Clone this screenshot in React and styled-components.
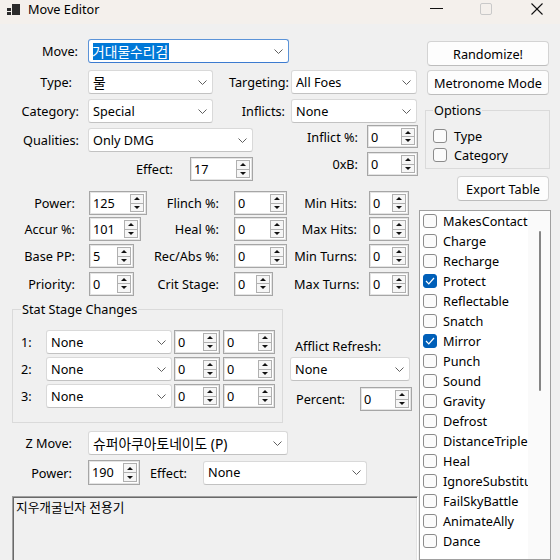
import React from "react";
import styled, { createGlobalStyle } from "styled-components";

const GlobalStyle = createGlobalStyle`
  * { box-sizing: border-box; }
  html, body {
    margin: 0;
    padding: 0;
    background: #f0f0f0;
  }
  body {
    font-family: "Noto Sans", "Noto Sans CJK KR", sans-serif;
    font-size: 12.7px;
    color: #000;
    overflow: hidden;
  }
`;

const Window = styled.div`
  width: 560px;
  height: 560px;
  overflow: hidden;
  background: #f0f0f0;
  display: flex;
  flex-direction: column;
`;

const TitleBar = styled.div`
  height: 24px;
  flex: none;
  background: #f4f0ec;
  display: flex;
  align-items: flex-start;
  padding: 1px 17px 0 7px;
`;

const TitleText = styled.span`
  margin-left: 7px;
  line-height: 16px;
  font-size: 12.7px;
`;

const Controls = styled.div`
  margin-left: auto;
  margin-top: 2px;
  display: flex;
  align-items: flex-start;
  gap: 37px;
  & > svg:last-child {
    margin-left: 2px;
  }
`;

const Body = styled.div`
  flex: 1;
  display: flex;
  align-items: flex-start;
`;

const LeftPane = styled.div`
  width: 419px;
  flex: none;
  padding-top: 15px;
  display: flex;
  flex-direction: column;
`;

const RightPane = styled.div`
  width: 132px;
  flex: none;
  padding-top: 17px;
  display: flex;
  flex-direction: column;
`;

const Row = styled.div`
  display: flex;
  align-items: center;
  height: ${(p) => p.$h || 24}px;
  margin-top: ${(p) => p.$mt || 0}px;
`;

const Label = styled.span`
  flex: none;
  width: ${(p) => p.$w}px;
  padding-right: ${(p) => p.$pr || 0}px;
  padding-left: ${(p) => p.$pl || 0}px;
  text-align: ${(p) => (p.$left ? "left" : "right")};
  white-space: nowrap;
  line-height: 18px;
`;

const ComboBox = styled.div`
  flex: none;
  width: ${(p) => p.$w}px;
  height: 24px;
  display: flex;
  align-items: center;
  padding: 0 5px 0 4px;
  background: #fff;
  border: 1px solid ${(p) => (p.$focused ? "#5b93d8" : "#d9d9d9")};
  border-bottom-color: ${(p) => (p.$focused ? "#3c7bd0" : "#c2c2c2")};
  border-radius: 3px;
  white-space: nowrap;
`;

const ComboText = styled.span`
  flex: 1;
  overflow: hidden;
  line-height: 17px;
  font-size: ${(p) => (p.$cjk ? "13.8px" : "inherit")};
`;

const Selected = styled.span`
  background: #0078d7;
  color: #fff;
  padding: 0 1px 1px 0;
  margin-left: -1px;
`;

const SpinBox = styled.div`
  flex: none;
  width: ${(p) => p.$w}px;
  height: ${(p) => p.$h || 24}px;
  display: flex;
  align-items: stretch;
  background: #fff;
  border: 1px solid #a6a6a6;
  box-shadow: inset 0 0 0 1px #e4e4e4;
  padding: 2px 2px 2px 3px;
`;

const SpinValue = styled.span`
  flex: 1;
  line-height: 18px;
`;

const SpinButtons = styled.div`
  width: 14px;
  flex: none;
  display: flex;
  flex-direction: column;
`;

const SpinButton = styled.div`
  flex: 1;
  border: 1px solid #b0b0b0;
  background: #f6f6f6;
  display: flex;
  align-items: center;
  justify-content: center;
  & + & {
    border-top: none;
  }
`;

const Arrow = styled.span`
  width: 0;
  height: 0;
  border-left: 3px solid transparent;
  border-right: 3px solid transparent;
  ${(p) =>
    p.$down
      ? "border-top: 3px solid #111;"
      : "border-bottom: 3px solid #111;"}
`;

const Block = styled.div`
  display: flex;
  margin-top: ${(p) => p.$mt || 0}px;
`;

const SubColumn = styled.div`
  display: flex;
  flex-direction: column;
  width: ${(p) => (p.$w ? `${p.$w}px` : "auto")};
  padding-top: ${(p) => p.$pt || 0}px;
`;

const StatsGrid = styled.div`
  margin-top: 10px;
  display: grid;
  grid-template-columns: 89px 64px 81px 60px 75px 40px;
  grid-template-rows: 24px 24px 26px 25px;
  row-gap: 2px;
  align-items: center;
`;

const Cell = styled.div`
  display: flex;
  align-items: center;
  height: 100%;
`;

const GroupBox = styled.fieldset`
  margin: ${(p) => p.$margin || 0};
  width: ${(p) => p.$w}px;
  min-inline-size: 0;
  border: 1px solid #dadada;
  padding: ${(p) => p.$pad};
`;

const Legend = styled.legend`
  padding: 0 1px;
  line-height: 16px;
  font-size: 12.7px;
`;

const LowerSection = styled.div`
  display: flex;
  align-items: flex-start;
  margin-top: 5px;
`;

const StatRow = styled.div`
  display: flex;
  align-items: center;
  height: 24px;
  gap: ${(p) => p.$gap || 0}px;
  margin-left: ${(p) => p.$ml || 0}px;
  & + & {
    margin-top: 3px;
  }
`;

const AfflictPane = styled.div`
  margin-left: 7px;
  padding-top: 36px;
  width: 122px;
  display: flex;
  flex-direction: column;
`;

const InfoBox = styled.div`
  margin: 11px 0 0 12px;
  width: 406px;
  height: 80px;
  border: 1px solid;
  border-color: #a0a0a0 #ffffff #ffffff #a0a0a0;
  box-shadow: inset 1px 1px 0 #696969, inset -1px -1px 0 #e3e3e3;
  padding: 2px 3px;
  line-height: 16px;
`;

const Button = styled.div`
  margin: ${(p) => p.$margin || 0};
  width: ${(p) => p.$w}px;
  height: 25px;
  display: flex;
  align-items: center;
  justify-content: center;
  background: #fdfdfd;
  border: 1px solid #d3d3d3;
  border-bottom-color: #bdbdbd;
  border-radius: 4px;
  white-space: nowrap;
`;

const CheckRow = styled.div`
  display: flex;
  align-items: center;
  height: ${(p) => p.$h || 20}px;
  padding-left: ${(p) => p.$pl || 0}px;
  gap: ${(p) => p.$gap || 6}px;
  white-space: nowrap;
`;

const CheckBox = styled.span`
  flex: none;
  width: 14px;
  height: 14px;
  border-radius: 3px;
  border: 1px solid ${(p) => (p.$checked ? "#005fb8" : "#8b8b8b")};
  background: ${(p) => (p.$checked ? "#005fb8" : "#fbfbfb")};
  display: flex;
  align-items: center;
  justify-content: center;
`;

const CheckText = styled.span`
  line-height: 18px;
`;

const ListBox = styled.div`
  margin-top: 9px;
  width: 132px;
  height: 350px;
  display: flex;
  background: #fff;
  border: 1px solid #a0a0a0;
  box-shadow: inset -1px 0 0 #e2e2e2;
`;

const ListItems = styled.div`
  width: 108px;
  flex: none;
  overflow: hidden;
  display: flex;
  flex-direction: column;
`;

const ScrollTrack = styled.div`
  flex: 1;
  background: #fafafa;
  padding: 20px 0 0 11px;
`;

const ScrollThumb = styled.div`
  width: 2px;
  height: 160px;
  border-radius: 1px;
  background: #858585;
`;

const Chevron = () => (
  <svg width="9" height="5" viewBox="0 0 9 5" style={{ flex: "none" }}>
    <polyline points="0.5,0.5 4.5,4.5 8.5,0.5" fill="none" stroke="#5f5f5f" strokeWidth="1" />
  </svg>
);

const Combo = ({ w, value, focused, cjk }) => (
  <ComboBox $w={w} $focused={focused}>
    <ComboText $cjk={cjk}>{focused ? <Selected>{value}</Selected> : value}</ComboText>
    <Chevron />
  </ComboBox>
);

const Spinner = ({ w, value, h }) => (
  <SpinBox $w={w} $h={h}>
    <SpinValue>{value}</SpinValue>
    <SpinButtons>
      <SpinButton>
        <Arrow />
      </SpinButton>
      <SpinButton>
        <Arrow $down />
      </SpinButton>
    </SpinButtons>
  </SpinBox>
);

const Check = ({ checked, label, h, pl, gap }) => (
  <CheckRow $h={h} $pl={pl} $gap={gap}>
    <CheckBox $checked={checked}>
      {checked && (
        <svg width="10" height="8" viewBox="0 0 10 8">
          <polyline points="1,4 3.8,6.8 9,1" fill="none" stroke="#fff" strokeWidth="1.2" />
        </svg>
      )}
    </CheckBox>
    <CheckText>{label}</CheckText>
  </CheckRow>
);

const AppIcon = () => (
  <svg width="14" height="16" viewBox="0 0 14 16" style={{ flex: "none" }}>
    <rect x="0" y="7" width="4" height="3" fill="#2b2b2b" />
    <rect x="0" y="11" width="4" height="3" fill="#2b2b2b" />
    <rect x="5" y="3" width="8" height="11" fill="#2b2b2b" />
  </svg>
);

const flags = [
  ["MakesContact", false],
  ["Charge", false],
  ["Recharge", false],
  ["Protect", true],
  ["Reflectable", false],
  ["Snatch", false],
  ["Mirror", true],
  ["Punch", false],
  ["Sound", false],
  ["Gravity", false],
  ["Defrost", false],
  ["DistanceTriple", false],
  ["Heal", false],
  ["IgnoreSubstitute", false],
  ["FailSkyBattle", false],
  ["AnimateAlly", false],
  ["Dance", false],
];

const stats = [
  ["Power:", "125", 58, "Flinch %:", 53, "Min Hits:"],
  ["Accur %:", "101", 52, "Heal %:", 53, "Max Hits:"],
  ["Base PP:", "5", 45, "Rec/Abs %:", 53, "Min Turns:"],
  ["Priority:", "0", 45, "Crit Stage:", 39, "Max Turns:"],
];

export default function App() {
  return (
    <Window>
      <GlobalStyle />
      <TitleBar>
        <AppIcon />
        <TitleText>Move Editor</TitleText>
        <Controls>
          <svg width="13" height="12" viewBox="0 0 13 12">
            <line x1="0" y1="5.5" x2="13" y2="5.5" stroke="#111" strokeWidth="1" />
          </svg>
          <svg width="12" height="12" viewBox="0 0 12 12">
            <rect x="0.5" y="0.5" width="11" height="11" rx="1.5" fill="none" stroke="#c9c9c9" strokeWidth="1" />
          </svg>
          <svg width="12" height="12" viewBox="0 0 12 12">
            <line x1="0.5" y1="0.5" x2="11.5" y2="11.5" stroke="#111" strokeWidth="1.1" />
            <line x1="11.5" y1="0.5" x2="0.5" y2="11.5" stroke="#111" strokeWidth="1.1" />
          </svg>
        </Controls>
      </TitleBar>

      <Body>
        <LeftPane>
          <Row>
            <Label $w={88} $pr={10}>Move:</Label>
            <Combo w={201} value="거대물수리검" focused cjk />
          </Row>
          <Row $mt={7}>
            <Label $w={88} $pr={16}>Type:</Label>
            <Combo w={125} value="물" cjk />
            <Label $w={78} $pr={2}>Targeting:</Label>
            <Combo w={126} value="All Foes" />
          </Row>
          <Row $mt={5}>
            <Label $w={88} $pr={9}>Category:</Label>
            <Combo w={125} value="Special" />
            <Label $w={78} $pr={6}>Inflicts:</Label>
            <Combo w={126} value="None" />
          </Row>

          <Block $mt={2}>
            <SubColumn $w={300} $pt={3}>
              <Row>
                <Label $w={88} $pr={9}>Qualities:</Label>
                <Combo w={165} value="Only DMG" />
              </Row>
              <Row $mt={5}>
                <Label $w={190} $pr={17}>Effect:</Label>
                <Spinner w={63} value="17" />
              </Row>
            </SubColumn>
            <SubColumn>
              <Row $h={23}>
                <Label $w={67} $pr={9}>Inflict %:</Label>
                <Spinner w={51} h={23} value="0" />
              </Row>
              <Row $mt={4}>
                <Label $w={67} $pr={9}>0xB:</Label>
                <Spinner w={51} value="0" />
              </Row>
            </SubColumn>
          </Block>

          <StatsGrid>
            {stats.map(([a, v, w, b, w2, c]) => (
              <React.Fragment key={a}>
                <Label $w={89} $pr={14}>{a}</Label>
                <Cell><Spinner w={w} value={v} /></Cell>
                <Label $w={81} $pr={15}>{b}</Label>
                <Cell><Spinner w={w2} value="0" /></Cell>
                <Label $w={75} $pr={12}>{c}</Label>
                <Cell><Spinner w={40} value="0" /></Cell>
              </React.Fragment>
            ))}
          </StatsGrid>

          <LowerSection>
            <GroupBox $w={271} $margin="0 0 0 12px" $pad="13px 7px 14px 8px">
              <Legend>Stat Stage Changes</Legend>
              {["1:", "2:", "3:"].map((n) => (
                <StatRow key={n}>
                  <Label $w={25} $left>{n}</Label>
                  <Combo w={126} value="None" />
                  <StatRow as="span" $gap={3} $ml={2}>
                    <Spinner w={46} value="0" />
                    <Spinner w={52} value="0" />
                  </StatRow>
                </StatRow>
              ))}
            </GroupBox>
            <AfflictPane>
              <Label $w={122} $left $pl={5}>Afflict Refresh:</Label>
              <Row $mt={2}>
                <Combo w={120} value="None" />
              </Row>
              <Row $mt={6}>
                <Label $w={70} $left $pl={6}>Percent:</Label>
                <Spinner w={52} value="0" />
              </Row>
            </AfflictPane>
          </LowerSection>

          <Row $mt={8}>
            <Label $w={88} $pr={16}>Z Move:</Label>
            <Combo w={200} value="슈퍼아쿠아토네이도 (P)" cjk />
          </Row>
          <Row $mt={5} $h={25}>
            <Label $w={88} $pr={16}>Power:</Label>
            <Spinner w={52} h={25} value="190" />
            <Label $w={63} $pr={16}>Effect:</Label>
            <Combo w={164} value="None" />
          </Row>

          <InfoBox>지우개굴닌자 전용기</InfoBox>
        </LeftPane>

        <RightPane>
          <Button $w={122} $margin="0 0 0 8px">Randomize!</Button>
          <Button $w={122} $margin="4px 0 0 8px">Metronome Mode</Button>
          <GroupBox $w={125} $margin="7px 0 0 6px" $pad="8px 7px 4px 7px">
            <Legend>Options</Legend>
            <Check label="Type" h={19} gap={7} />
            <Check label="Category" h={19} gap={7} />
          </GroupBox>
          <Button $w={92} $margin="7px 0 0 38px">Export Table</Button>
          <ListBox>
            <ListItems>
              {flags.map(([name, on]) => (
                <Check key={name} label={name} checked={on} pl={3} />
              ))}
            </ListItems>
            <ScrollTrack>
              <ScrollThumb />
            </ScrollTrack>
          </ListBox>
        </RightPane>
      </Body>
    </Window>
  );
}
